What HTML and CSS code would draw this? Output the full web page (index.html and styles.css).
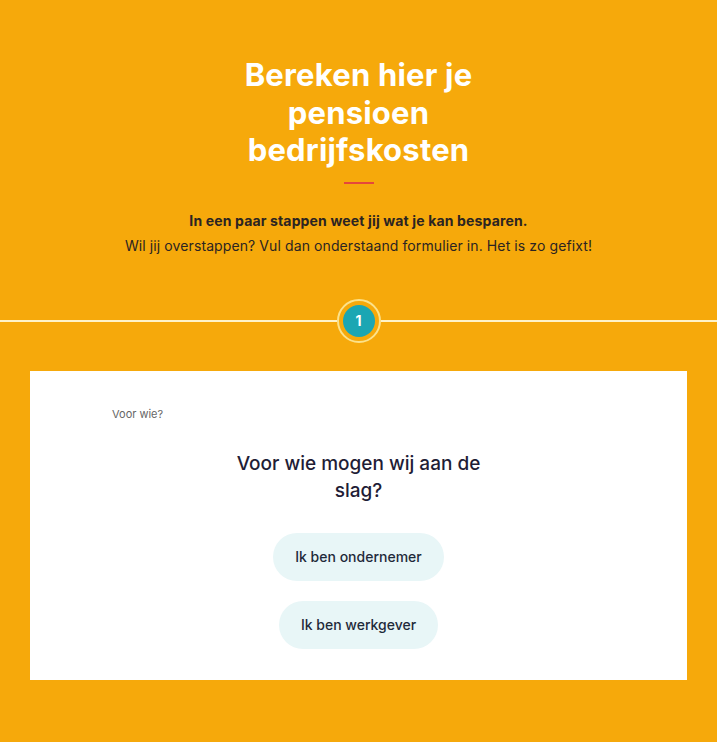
FILE: index.html
```
<!DOCTYPE html>
<html lang="nl">
<head>
<meta charset="utf-8">
<title>Bereken hier je pensioen bedrijfskosten</title>
<link rel="stylesheet" href="styles.css">
</head>
<body>
<header class="hero">
  <h1 class="hero-title">Bereken hier je pensioen bedrijfskosten</h1>
  <div class="hero-rule"></div>
  <p class="hero-lead">In een paar stappen weet jij wat je kan besparen.</p>
  <p class="hero-text">Wil jij overstappen? Vul dan onderstaand formulier in. Het is zo gefixt!</p>
</header>
<div class="steps">
  <span class="steps-line"></span>
  <span class="step-ring"><span class="step-dot">1</span></span>
  <span class="steps-line"></span>
</div>
<main class="card">
  <div class="card-label">Voor wie?</div>
  <h2 class="card-question">Voor wie mogen wij aan de slag?</h2>
  <div class="choices">
    <button class="choice">Ik ben ondernemer</button>
    <button class="choice">Ik ben werkgever</button>
  </div>
</main>
</body>
</html>
```
FILE: styles.css
```
html, body {
  margin: 0;
  padding: 0;
}
body {
  background: #f6a90b;
  font-family: "Inter", "Noto Sans", sans-serif;
  color: #2b2422;
  min-height: 742px;
}
.hero {
  display: flex;
  flex-direction: column;
  align-items: center;
  padding-top: 56px;
}
.hero-title {
  margin: 0;
  max-width: 270px;
  text-align: center;
  color: #ffffff;
  font-size: 31px;
  line-height: 37.5px;
  font-weight: 700;
  letter-spacing: 0.2px;
}
.hero-rule {
  width: 30px;
  height: 2px;
  background: #e5473b;
  margin-top: 13px;
}
.hero-lead {
  margin: 27px 0 0;
  font-size: 14px;
  line-height: 20px;
  font-weight: 700;
  letter-spacing: 0.15px;
  color: #2b2422;
}
.hero-text {
  margin: 5px 0 0;
  font-size: 14px;
  line-height: 20px;
  letter-spacing: 0.1px;
  color: #2b2422;
}
.steps {
  display: flex;
  align-items: center;
  margin-top: 43px;
}
.steps-line {
  flex: 1;
  height: 2px;
  background: #fff3c8;
}
.step-ring {
  width: 40px;
  height: 40px;
  border: 2px solid #fce28a;
  border-radius: 50%;
  display: flex;
  align-items: center;
  justify-content: center;
}
.step-dot {
  width: 32px;
  height: 32px;
  border-radius: 50%;
  background: #1ba6b3;
  color: #ffffff;
  font-weight: 700;
  font-size: 14px;
  display: flex;
  align-items: center;
  justify-content: center;
}
.card {
  margin: 28px 30px 0;
  background: #ffffff;
  padding: 36px 82px 31px;
  display: flex;
  flex-direction: column;
  align-items: center;
}
.card-label {
  align-self: flex-start;
  font-size: 11px;
  line-height: 14px;
  color: #666666;
}
.card-question {
  margin: 29px 0 0;
  max-width: 270px;
  text-align: center;
  font-size: 19px;
  line-height: 27px;
  font-weight: 500;
  color: #1f1d36;
}
.choices {
  margin-top: 29px;
  display: flex;
  flex-direction: column;
  align-items: center;
  gap: 20px;
}
.choice {
  font-family: inherit;
  border: none;
  background: #e8f6f7;
  color: #1f2a3a;
  font-size: 14px;
  font-weight: 500;
  height: 48px;
  padding: 0 22px;
  border-radius: 24px;
}
```
